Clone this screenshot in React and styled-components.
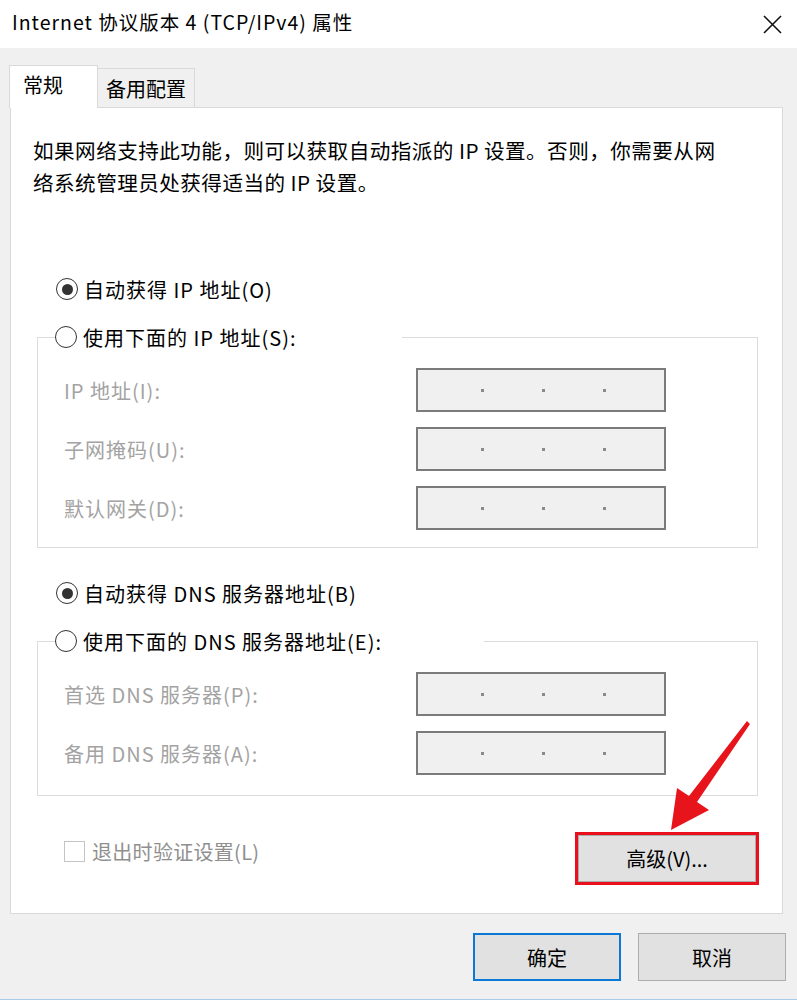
import React from 'react';
import styled, { createGlobalStyle } from 'styled-components';

const GlobalStyle = createGlobalStyle`
  body {
    margin: 0;
    background: #f0f0f0;
    font-family: "Noto Sans CJK SC", "Noto Sans", sans-serif;
  }
`

const Window = styled.div`
  width: 797px;
  height: 1000px;
  background: #f0f0f0;
  border-bottom: 1px solid #a8cbea;
  box-sizing: border-box;
  display: flex;
  flex-direction: column;
  position: relative;
  overflow: hidden;
`

const TitleBar = styled.div`
  height: 48px;
  flex-shrink: 0;
  background: #ffffff;
  display: flex;
  align-items: center;
  justify-content: space-between;
  padding: 0 15px 0 12px;
  box-sizing: border-box;
`

const Title = styled.div`
  font-size: 19.5px;
  letter-spacing: 1px;
  color: #000;
  margin-top: -6px;
`

const Body = styled.div`
  flex: 1;
  display: flex;
  flex-direction: column;
  padding: 17px 14px 0 10px;
`

const TabRow = styled.div`
  display: flex;
  align-items: flex-end;
  margin-left: -1px;
  margin-bottom: -1px;
  position: relative;
  z-index: 1;
`

const Tab = styled.div`
  box-sizing: border-box;
  font-size: 20px;
  color: #000;
  display: flex;
  align-items: center;
  border: 1px solid #d9d9d9;
  border-bottom: none;
  background: ${(p) => (p.$active ? '#ffffff' : '#f0f0f0')};
  width: ${(p) => (p.$active ? '89px' : '97px')};
  height: ${(p) => (p.$active ? '43px' : '39px')};
  margin-bottom: ${(p) => (p.$active ? '0' : '1px')};
  padding: ${(p) => (p.$active ? '0 0 6px 13px' : '0 0 0 8px')};
  border-left: ${(p) => (p.$active ? '1px solid #d9d9d9' : 'none')};
`

const Panel = styled.div`
  background: #ffffff;
  border: 1px solid #d9d9d9;
  padding: 0 24px 28px 22px;
  display: flex;
  flex-direction: column;
`

const Description = styled.p`
  margin: 26px 0 0;
  font-size: 20.6px;
  letter-spacing: 0.45px;
  line-height: 32px;
  color: #000;
`

const RadioRow = styled.label`
  display: flex;
  align-items: center;
  gap: 6px;
  height: 32px;
  font-size: 20px;
  letter-spacing: 1px;
  color: #000;
  margin-left: ${(p) => p.$indent || 0}px;
  margin-top: ${(p) => p.$top || 0}px;
`

const RadioCircle = styled.span`
  box-sizing: border-box;
  width: 22px;
  height: 22px;
  border-radius: 50%;
  border: 1.6px solid #333;
  display: flex;
  align-items: center;
  justify-content: center;
  background: #fff;
  flex-shrink: 0;

  &::after {
    content: '';
    width: 11px;
    height: 11px;
    border-radius: 50%;
    background: ${(p) => (p.$checked ? '#333' : 'transparent')};
  }
`

const GroupBox = styled.fieldset`
  margin: ${(p) => p.$top}px 0 0 4px;
  padding: 15px 0 ${(p) => p.$bottom}px 0;
  border: 1px solid #dcdcdc;
  min-width: 0;
  display: flex;
  flex-direction: column;
  gap: 15px;
`

const Legend = styled.legend`
  padding: 0;
  margin-left: 17px;
  width: ${(p) => p.$width}px;
`

const FieldRow = styled.div`
  display: flex;
  align-items: center;
  padding-left: 26px;
`

const FieldLabel = styled.span`
  width: 352px;
  font-size: 20px;
  letter-spacing: 1px;
  color: #a3a3a3;
`

const IpInput = styled.div`
  box-sizing: border-box;
  width: 250px;
  height: 44px;
  border: 2px solid #7b7b7b;
  background: #f0f0f0;
  display: flex;
  align-items: center;
  gap: 58px;
  padding-left: 63px;
`

const Dot = styled.span`
  width: 3px;
  height: 3px;
  background: #8a8a8a;
`

const BottomRow = styled.div`
  display: flex;
  justify-content: space-between;
  align-items: flex-start;
  margin-top: 36px;
`

const CheckRow = styled.label`
  display: flex;
  align-items: center;
  gap: 7px;
  margin: 5px 0 0 31px;
  font-size: 20px;
  letter-spacing: 0.3px;
  color: #8f8f8f;
`

const CheckBox = styled.span`
  box-sizing: border-box;
  width: 21px;
  height: 21px;
  border: 1.5px solid #c4c4c4;
  background: #fff;
`

const Highlight = styled.div`
  box-sizing: border-box;
  width: 184px;
  height: 53px;
  border: 3px solid #e8101c;
  margin-right: -1px;
  display: flex;
`

const Button = styled.button`
  box-sizing: border-box;
  font-family: inherit;
  font-size: 20px;
  color: #000;
  background: #e1e1e1;
  border: ${(p) => (p.$primary ? '2px solid #0a78d4' : '1px solid #adadad')};
  width: ${(p) => (p.$fill ? '100%' : '148px')};
  height: ${(p) => (p.$fill ? '100%' : '48px')};
  padding: 0;
  display: flex;
  align-items: center;
  justify-content: center;
`

const Footer = styled.div`
  display: flex;
  justify-content: flex-end;
  gap: 17px;
  padding: 19px 0 0;
  margin-right: -3px;
`

const Arrow = styled.svg`
  position: absolute;
  left: 660px;
  top: 715px;
`

const IpField = ({ label }) => (
  <FieldRow>
    <FieldLabel>{label}</FieldLabel>
    <IpInput>
      <Dot />
      <Dot />
      <Dot />
    </IpInput>
  </FieldRow>
)

const App = () => {
  return (
    <Window>
      <GlobalStyle />
      <TitleBar>
        <Title>Internet 协议版本 4 (TCP/IPv4) 属性</Title>
        <svg width="19" height="19" viewBox="0 0 19 19">
          <path d="M1 1 L18 18 M18 1 L1 18" stroke="#111" strokeWidth="1.6" fill="none" />
        </svg>
      </TitleBar>
      <Body>
        <TabRow>
          <Tab $active>常规</Tab>
          <Tab>备用配置</Tab>
        </TabRow>
        <Panel>
          <Description>
            如果网络支持此功能，则可以获取自动指派的 IP 设置。否则，你需要从网
            <br />
            络系统管理员处获得适当的 IP 设置。
          </Description>

          <RadioRow $indent={23} $top={75}>
            <RadioCircle $checked />
            自动获得 IP 地址(O)
          </RadioRow>
          <GroupBox $top={16} $bottom={17}>
            <Legend $width={347}>
              <RadioRow>
                <RadioCircle />
                使用下面的 IP 地址(S):
              </RadioRow>
            </Legend>
            <IpField label="IP 地址(I):" />
            <IpField label="子网掩码(U):" />
            <IpField label="默认网关(D):" />
          </GroupBox>

          <RadioRow $indent={23} $top={29}>
            <RadioCircle $checked />
            自动获得 DNS 服务器地址(B)
          </RadioRow>
          <GroupBox $top={16} $bottom={20}>
            <Legend $width={429}>
              <RadioRow>
                <RadioCircle />
                使用下面的 DNS 服务器地址(E):
              </RadioRow>
            </Legend>
            <IpField label="首选 DNS 服务器(P):" />
            <IpField label="备用 DNS 服务器(A):" />
          </GroupBox>

          <BottomRow>
            <CheckRow>
              <CheckBox />
              退出时验证设置(L)
            </CheckRow>
            <Highlight>
              <Button $fill>高级(V)...</Button>
            </Highlight>
          </BottomRow>
        </Panel>
        <Footer>
          <Button $primary>确定</Button>
          <Button>取消</Button>
        </Footer>
      </Body>
      <Arrow width="100" height="125" viewBox="0 0 100 125">
        <polygon
          points="11,115 49,95 37,87 90,9 87,6 29,81 17,73"
          fill="#e8141c"
        />
      </Arrow>
    </Window>
  );
};

export default App;
